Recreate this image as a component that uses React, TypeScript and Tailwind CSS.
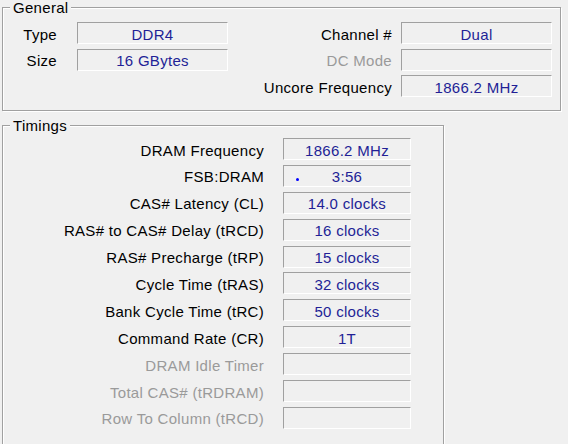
const FONT = { fontFamily: '"Liberation Sans", Arial, sans-serif' }

interface FieldProps {
  value?: string
  dot?: boolean
  wide?: boolean
}

const Field = ({ value, dot, wide }: FieldProps) => (
  <div
    className={
      'relative flex h-[22px] items-center justify-center border border-t-[#a0a0a0] border-l-[#a0a0a0] border-r-white border-b-white bg-[#f0f0f0] pt-[2px] text-[#221f96] ' +
      (wide ? 'w-[151px]' : 'w-[128px]')
    }
  >
    {dot && (
      <span className="absolute left-[12px] top-[12px] h-[3px] w-[3px] rounded-full bg-[#0000ff]" />
    )}
    {value}
  </div>
)

const Label = ({ children, disabled }: { children?: string; disabled?: boolean }) => (
  <div
    className={
      'flex h-[22px] items-center justify-end whitespace-nowrap pt-[2px] ' +
      (disabled ? 'text-[#9a9a9a]' : 'text-black')
    }
  >
    {children}
  </div>
)

const timings: Array<{ label: string; value?: string; dot?: boolean; disabled?: boolean }> = [
  { label: 'DRAM Frequency', value: '1866.2 MHz' },
  { label: 'FSB:DRAM', value: '3:56', dot: true },
  { label: 'CAS# Latency (CL)', value: '14.0 clocks' },
  { label: 'RAS# to CAS# Delay (tRCD)', value: '16 clocks' },
  { label: 'RAS# Precharge (tRP)', value: '15 clocks' },
  { label: 'Cycle Time (tRAS)', value: '32 clocks' },
  { label: 'Bank Cycle Time (tRC)', value: '50 clocks' },
  { label: 'Command Rate (CR)', value: '1T' },
  { label: 'DRAM Idle Timer', disabled: true },
  { label: 'Total CAS# (tRDRAM)', disabled: true },
  { label: 'Row To Column (tRCD)', disabled: true },
]

export default function App() {
  return (
    <div
      className="h-[444px] w-[568px] overflow-hidden bg-[#f0f0f0] pl-[2px] text-[15px] leading-[15px] tracking-[0.3px]"
      style={FONT}
    >
      {/* General */}
      <fieldset className="h-[111px] w-[559px] border border-[#a0a0a0] px-0 pt-[7px] shadow-[inset_1px_1px_0_#fff,1px_1px_0_#fff]">
        <legend className="ml-[7px] bg-[#f0f0f0] px-[3px] leading-[15px] text-black">General</legend>
        <div className="grid grid-cols-[54px_171px_164px_160px] grid-rows-[22px_22px_22px] gap-y-[4.5px]">
          <Label>Type</Label>
          <div className="ml-[20px]">
            <Field wide value="DDR4" />
          </div>
          <Label>Channel #</Label>
          <div className="ml-[9px]">
            <Field wide value="Dual" />
          </div>

          <Label>Size</Label>
          <div className="ml-[20px]">
            <Field wide value="16 GBytes" />
          </div>
          <Label disabled>DC Mode</Label>
          <div className="ml-[9px]">
            <Field wide />
          </div>

          <div />
          <div />
          <Label>Uncore Frequency</Label>
          <div className="ml-[9px]">
            <Field wide value="1866.2 MHz" />
          </div>
        </div>
      </fieldset>

      {/* Timings */}
      <fieldset className="mt-[7px] h-[340px] w-[442px] border border-[#a0a0a0] px-0 pt-[5px] shadow-[inset_1px_1px_0_#fff,1px_1px_0_#fff]">
        <legend className="ml-[7px] bg-[#f0f0f0] px-[3px] leading-[15px] text-black">Timings</legend>
        <div className="flex flex-col gap-y-[4.9px]">
          {timings.map((t) => (
            <div key={t.label} className="flex items-center">
              <div className="w-[261px]">
                <Label disabled={t.disabled}>{t.label}</Label>
              </div>
              <div className="ml-[19px]">
                <Field value={t.value} dot={t.dot} />
              </div>
            </div>
          ))}
        </div>
      </fieldset>
    </div>
  )
}
